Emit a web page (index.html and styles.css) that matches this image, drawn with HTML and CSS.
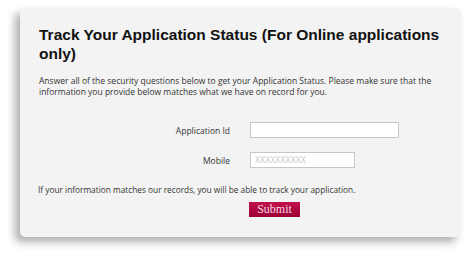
FILE: index.html
```html
<!DOCTYPE html>
<html>
<head>
<meta charset="utf-8">
<link rel="stylesheet" href="styles.css">
</head>
<body>
<div class="card">
  <h1 class="title">Track Your Application Status (For Online applications only)</h1>
  <p class="intro">Answer all of the security questions below to get your Application Status. Please make sure that the information you provide below matches what we have on record for you.</p>
  <div class="form">
    <label class="label" for="appid">Application Id</label>
    <input class="field field-long" id="appid" type="text">
    <label class="label" for="mobile">Mobile</label>
    <input class="field field-short" id="mobile" type="text" placeholder="XXXXXXXXXX">
  </div>
  <p class="note">If your information matches our records, you will be able to track your application.</p>
  <div class="actions">
    <button class="submit" type="button">Submit</button>
  </div>
</div>
</body>
</html>
```
FILE: styles.css
```css
html, body {
  margin: 0;
  padding: 0;
  background: #ffffff;
}
body {
  width: 474px;
  height: 257px;
  overflow: hidden;
}
.card {
  box-sizing: border-box;
  width: 441px;
  height: 229px;
  margin: 8px 0 0 20px;
  padding: 17px 10px 0 19px;
  background: #f3f3f3;
  border-radius: 5px;
  box-shadow: -5px 5px 8px rgba(0, 0, 0, 0.32);
  font-family: "Open Sans", "DejaVu Sans", sans-serif;
  color: #333333;
}
.title {
  margin: 0;
  font-family: "Liberation Sans", Arial, sans-serif;
  font-weight: bold;
  font-size: 15.5px;
  line-height: 19px;
  color: #111111;
}
.intro {
  margin: 13px 0 0 0;
  font-size: 8.5px;
  line-height: 10.5px;
}
.form {
  display: grid;
  grid-template-columns: 191px auto;
  column-gap: 20px;
  row-gap: 14px;
  align-items: center;
  margin-top: 25px;
}
.label {
  text-align: right;
  font-size: 8.5px;
}
.field {
  box-sizing: border-box;
  height: 16px;
  border: 1px solid #c6c6c6;
  background: #ffffff;
  padding: 0 4px;
  font-family: "Open Sans", sans-serif;
  font-size: 8.8px;
  outline: none;
}
.field::placeholder {
  color: #c8c8c8;
}
.field-long { width: 149px; }
.field-short { width: 105px; }
.note {
  margin: 17px 0 0 -1px;
  font-size: 8.3px;
  line-height: 10.5px;
}
.actions {
  margin: 0 0 0 210px;
}
.submit {
  width: 51px;
  height: 15px;
  padding: 0;
  border: none;
  border-radius: 0;
  background: linear-gradient(#c2104e, #9b0035);
  color: #f4dbe3;
  font-family: "Liberation Serif", "Times New Roman", serif;
  font-size: 12px;
  line-height: 15px;
  cursor: pointer;
}
```
